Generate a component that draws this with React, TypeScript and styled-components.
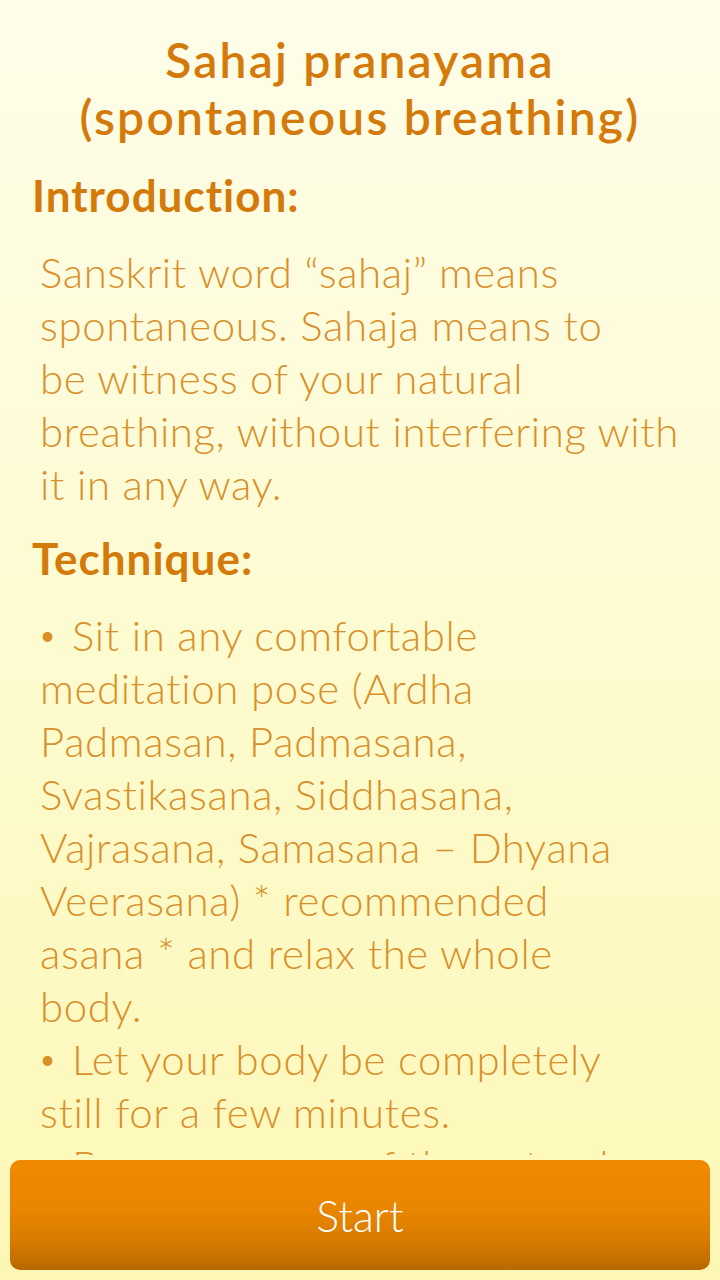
import React from 'react';
import styled, { createGlobalStyle } from 'styled-components';

const GlobalStyle = createGlobalStyle`
  html, body {
    margin: 0;
    padding: 0;
    height: 100%;
  }
  body {
    font-family: 'Lato', 'Liberation Sans', sans-serif;
  }
`;

const Screen = styled.div`
  height: 100vh;
  display: flex;
  flex-direction: column;
  background: linear-gradient(180deg, #fefde9 0%, #fdfbd0 50%, #fdf7b6 100%);
  overflow: hidden;
`;

const Scroll = styled.div`
  flex: 1;
  overflow: hidden;
  padding: 31px 0 0;
`;

const Title = styled.h1`
  margin: 0 0 22px;
  text-align: center;
  font-size: 48px;
  line-height: 57px;
  font-weight: 600;
  letter-spacing: 2.2px;
  color: #d47a0a;
`;

const SectionHeading = styled.h2`
  margin: 0 0 23px;
  padding-left: 32px;
  font-size: 44px;
  line-height: 56px;
  font-weight: 700;
  letter-spacing: 1px;
  color: #d47a0a;
`;

const Body = styled.p`
  margin: 0 0 19px;
  padding: 0 10px 0 40px;
  font-size: 42px;
  line-height: 53px;
  font-weight: 300;
  letter-spacing: 0.6px;
  color: #d9902a;
  white-space: nowrap;
`;

const Bullet = styled.span`
  display: inline-block;
  width: 32px;
  font-size: 26px;
  font-weight: 400;
  vertical-align: top;
`;

const Footer = styled.div`
  padding: 5px 10px 10px;
`;

const StartButton = styled.button`
  width: 100%;
  height: 110px;
  border: none;
  border-radius: 10px;
  background: linear-gradient(180deg, #ef8a00 0%, #e98600 45%, #d67b00 75%, #b86800 100%);
  color: #ffffff;
  font-family: 'Lato', 'Liberation Sans', sans-serif;
  font-size: 43px;
  font-weight: 300;
  cursor: pointer;
`;

const intro = [
  'Sanskrit word “sahaj” means',
  'spontaneous. Sahaja means to',
  'be witness of your natural',
  'breathing, without interfering with',
  'it in any way.',
];

const technique: { text: string; bullet?: boolean }[] = [
  { text: 'Sit in any comfortable', bullet: true },
  { text: 'meditation pose (Ardha' },
  { text: 'Padmasan, Padmasana,' },
  { text: 'Svastikasana, Siddhasana,' },
  { text: 'Vajrasana, Samasana – Dhyana' },
  { text: 'Veerasana) * recommended' },
  { text: 'asana * and relax the whole' },
  { text: 'body.' },
  { text: 'Let your body be completely', bullet: true },
  { text: 'still for a few minutes.' },
  { text: 'Become aware of the natural', bullet: true },
  { text: 'breath flowing in and out.' },
];

export default function App() {
  return (
    <>
      <GlobalStyle />
      <Screen>
        <Scroll>
          <Title>
            Sahaj pranayama
            <br />
            (spontaneous breathing)
          </Title>
          <SectionHeading>Introduction:</SectionHeading>
          <Body>
            {intro.map((line, i) => (
              <React.Fragment key={i}>
                {line}
                {i < intro.length - 1 && <br />}
              </React.Fragment>
            ))}
          </Body>
          <SectionHeading>Technique:</SectionHeading>
          <Body>
            {technique.map((line, i) => (
              <React.Fragment key={i}>
                {line.bullet && <Bullet>•</Bullet>}
                {line.text}
                {i < technique.length - 1 && <br />}
              </React.Fragment>
            ))}
          </Body>
        </Scroll>
        <Footer>
          <StartButton>Start</StartButton>
        </Footer>
      </Screen>
    </>
  );
}
